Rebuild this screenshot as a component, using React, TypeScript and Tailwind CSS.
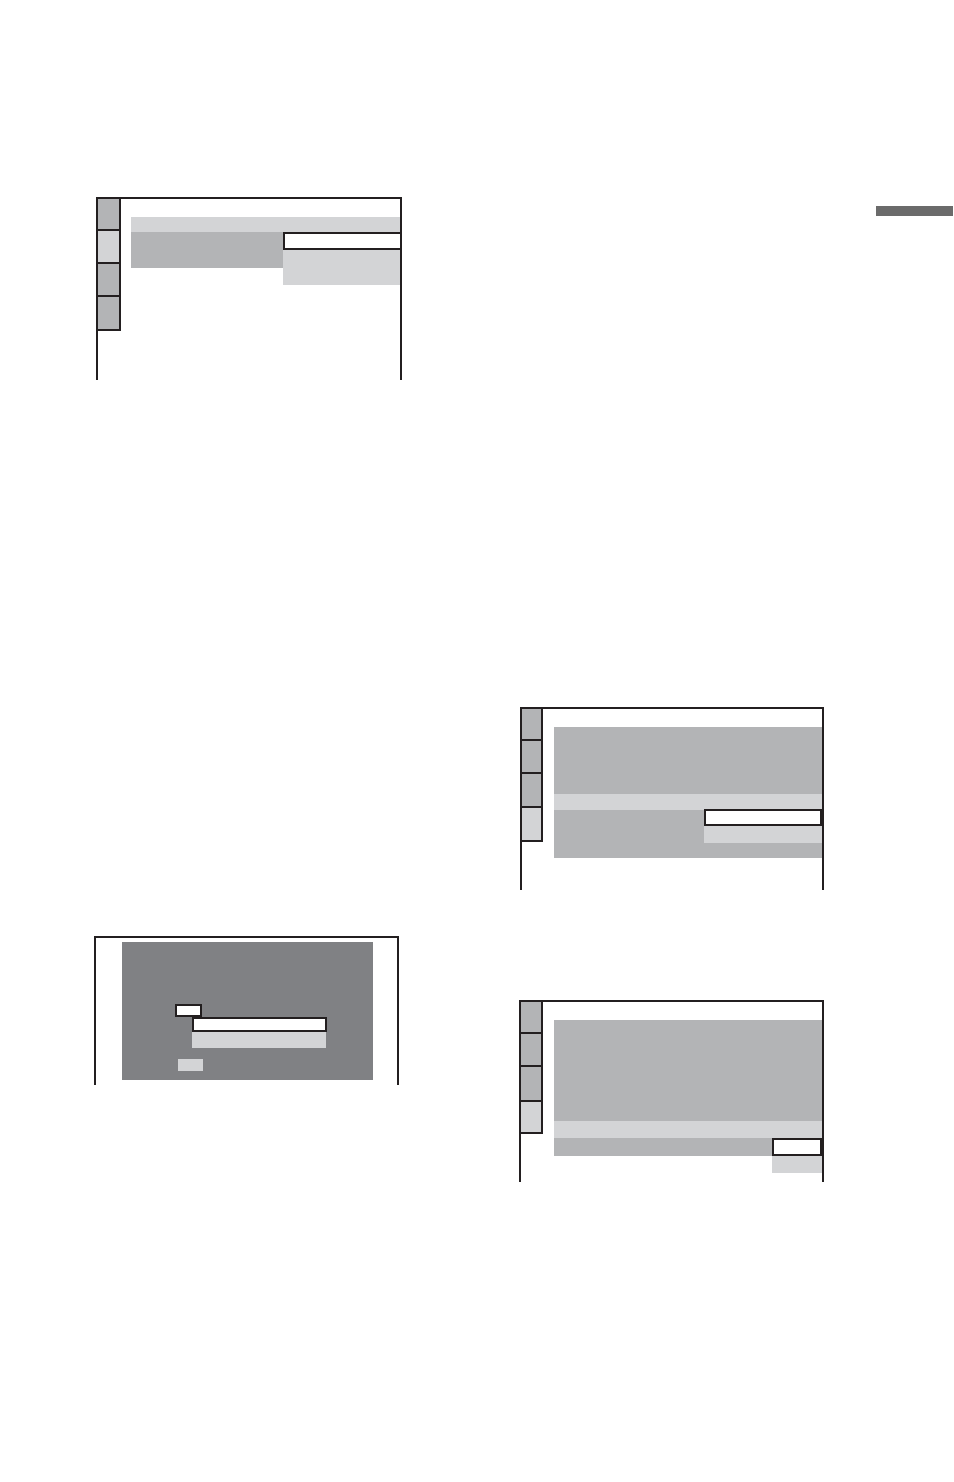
import React from 'react';

const GRAY = 'bg-[#b3b4b6]';
const LIGHT = 'bg-[#d3d4d6]';

interface TabsProps {
  heights: number[];
  active: number;
  width: string;
}

// left column of menu tabs, one of them highlighted
const Tabs: React.FC<TabsProps> = ({ heights, active, width }) => (
  <div className={`flex flex-col shrink-0 ${width}`}>
    {heights.map((h, i) => (
      <div
        key={i}
        className={`border-r-2 border-b-2 border-[#231f20] ${i === active ? LIGHT : GRAY}`}
        style={{ height: h }}
      />
    ))}
  </div>
);

const Frame: React.FC<{ className: string; children: React.ReactNode }> = ({ className, children }) => (
  <div className={`border-x-2 border-t-2 border-[#231f20] bg-white flex ${className}`}>{children}</div>
);

export default function App() {
  return (
    <div className="w-[954px] h-[1482px] bg-white flex overflow-hidden">
      {/* left column */}
      <div className="w-[402px] shrink-0 pl-[96px] pt-[197px] flex flex-col">
        <Frame className="w-[306px] h-[183px]">
          <Tabs heights={[32, 33, 33, 34]} active={1} width="w-[23px]" />
          <div className="flex-1 pl-[10px] pt-[18px] flex flex-col">
            <div className={`h-[15px] ${LIGHT}`} />
            <div className="flex">
              <div className={`w-[152px] h-[36px] ${GRAY}`} />
              <div className="flex-1 flex flex-col">
                <div className="h-[18px] mr-[-2px] border-2 border-[#231f20] bg-white" />
                <div className={`h-[35px] ${LIGHT}`} />
              </div>
            </div>
          </div>
        </Frame>

        <Frame className="mt-[556px] ml-[-2px] w-[305px] h-[149px]">
          <div className="flex-1 pl-[26px] pr-[24px] pt-[4px]">
            <div className="h-[138px] bg-[#808184] pt-[62px] flex flex-col items-start">
              <div className="ml-[53px] w-[27px] h-[13px] border-2 border-[#231f20] bg-white" />
              <div className="ml-[70px] w-[135px] h-[15px] border-2 border-[#231f20] bg-white" />
              <div className={`ml-[70px] w-[134px] h-[16px] ${LIGHT}`} />
              <div className={`ml-[56px] mt-[11px] w-[25px] h-[12px] ${LIGHT}`} />
            </div>
          </div>
        </Frame>
      </div>

      {/* right column */}
      <div className="w-[305px] shrink-0 ml-[117px] pt-[707px] flex flex-col">
        <Frame className="ml-[1px] w-[304px] h-[183px]">
          <Tabs heights={[32, 33, 34, 34]} active={3} width="w-[21px]" />
          <div className="flex-1 pl-[11px] pt-[18px] flex flex-col">
            <div className={`h-[67px] ${GRAY}`} />
            <div className={`h-[16px] ${LIGHT}`} />
            <div className={`h-[48px] ${GRAY} flex justify-end`}>
              <div className="w-[118px] flex flex-col mt-[-1px]">
                <div className="h-[17px] border-2 border-[#231f20] bg-white" />
                <div className={`h-[17px] ${LIGHT}`} />
              </div>
            </div>
          </div>
        </Frame>

        <Frame className="mt-[110px] w-[305px] h-[182px]">
          <Tabs heights={[32, 33, 35, 32]} active={3} width="w-[22px]" />
          <div className="flex-1 pl-[11px] pt-[18px] flex flex-col">
            <div className={`h-[101px] ${GRAY}`} />
            <div className={`h-[17px] ${LIGHT}`} />
            <div className="flex">
              <div className={`flex-1 h-[18px] ${GRAY}`} />
              <div className="w-[50px] flex flex-col">
                <div className="h-[18px] border-2 border-[#231f20] bg-white" />
                <div className={`h-[17px] ${LIGHT}`} />
              </div>
            </div>
          </div>
        </Frame>
      </div>

      {/* section marker at page edge */}
      <div className="ml-[52px] pt-[206px]">
        <div className="w-[77px] h-[10px] bg-[#6b6b6b]" />
      </div>
    </div>
  );
}
